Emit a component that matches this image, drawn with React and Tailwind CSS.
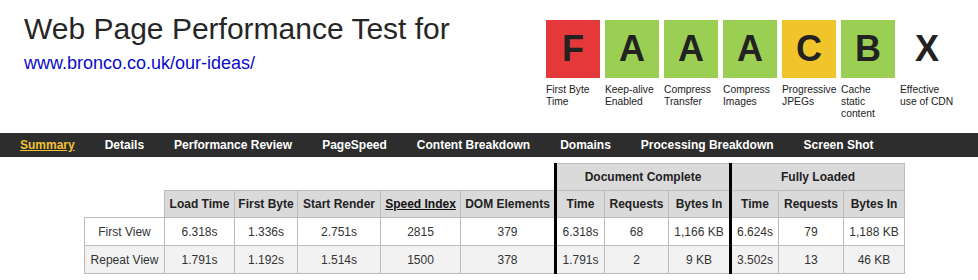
import React from 'react';

const grades = [
  { letter: 'F', bg: 'bg-[#e5383b]', label: 'First Byte Time' },
  { letter: 'A', bg: 'bg-[#9bcf53]', label: 'Keep-alive Enabled' },
  { letter: 'A', bg: 'bg-[#9bcf53]', label: 'Compress Transfer' },
  { letter: 'A', bg: 'bg-[#9bcf53]', label: 'Compress Images' },
  { letter: 'C', bg: 'bg-[#f2c42b]', label: 'Progressive JPEGs' },
  { letter: 'B', bg: 'bg-[#9bcf53]', label: 'Cache static content' },
  { letter: 'X', bg: '', label: 'Effective use of CDN' },
];

const navItems = [
  'Summary',
  'Details',
  'Performance Review',
  'PageSpeed',
  'Content Breakdown',
  'Domains',
  'Processing Breakdown',
  'Screen Shot',
];

const rows = [
  {
    name: 'First View',
    bg: 'bg-white',
    cells: ['6.318s', '1.336s', '2.751s', '2815', '379', '6.318s', '68', '1,166 KB', '6.624s', '79', '1,188 KB'],
  },
  {
    name: 'Repeat View',
    bg: 'bg-[#f2f2f2]',
    cells: ['1.791s', '1.192s', '1.514s', '1500', '378', '1.791s', '2', '9 KB', '3.502s', '13', '46 KB'],
  },
];

const colWidths = [80, 70, 63, 83, 80, 95, 49, 64, 62, 48, 65, 61];

const cell = 'border border-[#bcbcbc] text-center align-middle';
const head = 'border border-[#bcbcbc] bg-[#dadada] text-center align-middle font-bold text-[#222]';
const thick = 'border-l-[3px] border-l-black';

export default function App() {
  return (
    <div className="w-[978px] h-[280px] bg-white overflow-hidden" style={{ fontFamily: '"Liberation Sans", Arial, sans-serif' }}>
      {/* header */}
      <div className="h-[133px] flex justify-between px-6">
        <div className="pt-[12px]">
          <h1 className="text-[30px] leading-[34px] text-[#262626]">Web Page Performance Test for</h1>
          <p className="mt-[6px] text-[18px] leading-[22px] text-[#0a0ac8]">www.bronco.co.uk/our-ideas/</p>
        </div>
        <div className="flex gap-[5px] pt-5">
          {grades.map((g, i) => (
            <div key={i} className="w-[54px]">
              <div className={`h-[58px] flex items-center justify-center text-[36px] font-bold text-[#222] ${g.bg}`}>
                {g.letter}
              </div>
              <div className="mt-[6px] text-[10.3px] leading-[12px] text-[#222]">{g.label}</div>
            </div>
          ))}
        </div>
      </div>

      {/* nav */}
      <div className="h-[24px] bg-[#2d2d2d] flex items-center gap-[30px] pl-[20px]">
        {navItems.map((item, i) => (
          <a
            key={item}
            href="#"
            className={
              i === 0
                ? 'text-[12px] font-bold text-[#f2c230] underline'
                : 'text-[12px] font-bold text-white'
            }
          >
            {item}
          </a>
        ))}
      </div>

      {/* results table */}
      <div className="pt-[6px] pl-[84px]">
        <table className="border-collapse table-fixed w-[820px] text-[12px] text-[#333]">
          <colgroup>
            {colWidths.map((w, i) => (
              <col key={i} style={{ width: w }} />
            ))}
          </colgroup>
          <thead>
            <tr className="h-[27px]">
              <th colSpan={6} className="border-0"></th>
              <th colSpan={3} className={`${head} ${thick}`}>Document Complete</th>
              <th colSpan={3} className={`${head} ${thick}`}>Fully Loaded</th>
            </tr>
            <tr className="h-[27px]">
              <th className="border-0"></th>
              <th className={head}>Load Time</th>
              <th className={head}>First Byte</th>
              <th className={head}>Start Render</th>
              <th className={head}>
                <a href="#" className="underline text-[#111]">Speed Index</a>
              </th>
              <th className={head}>DOM Elements</th>
              <th className={`${head} ${thick}`}>Time</th>
              <th className={head}>Requests</th>
              <th className={head}>Bytes In</th>
              <th className={`${head} ${thick}`}>Time</th>
              <th className={head}>Requests</th>
              <th className={head}>Bytes In</th>
            </tr>
          </thead>
          <tbody>
            {rows.map((r) => (
              <tr key={r.name} className={`h-[28px] ${r.bg}`}>
                <td className={cell}>{r.name}</td>
                {r.cells.map((c, i) => (
                  <td key={i} className={i === 5 || i === 8 ? `${cell} ${thick}` : cell}>
                    {c}
                  </td>
                ))}
              </tr>
            ))}
          </tbody>
        </table>
      </div>
    </div>
  );
}
